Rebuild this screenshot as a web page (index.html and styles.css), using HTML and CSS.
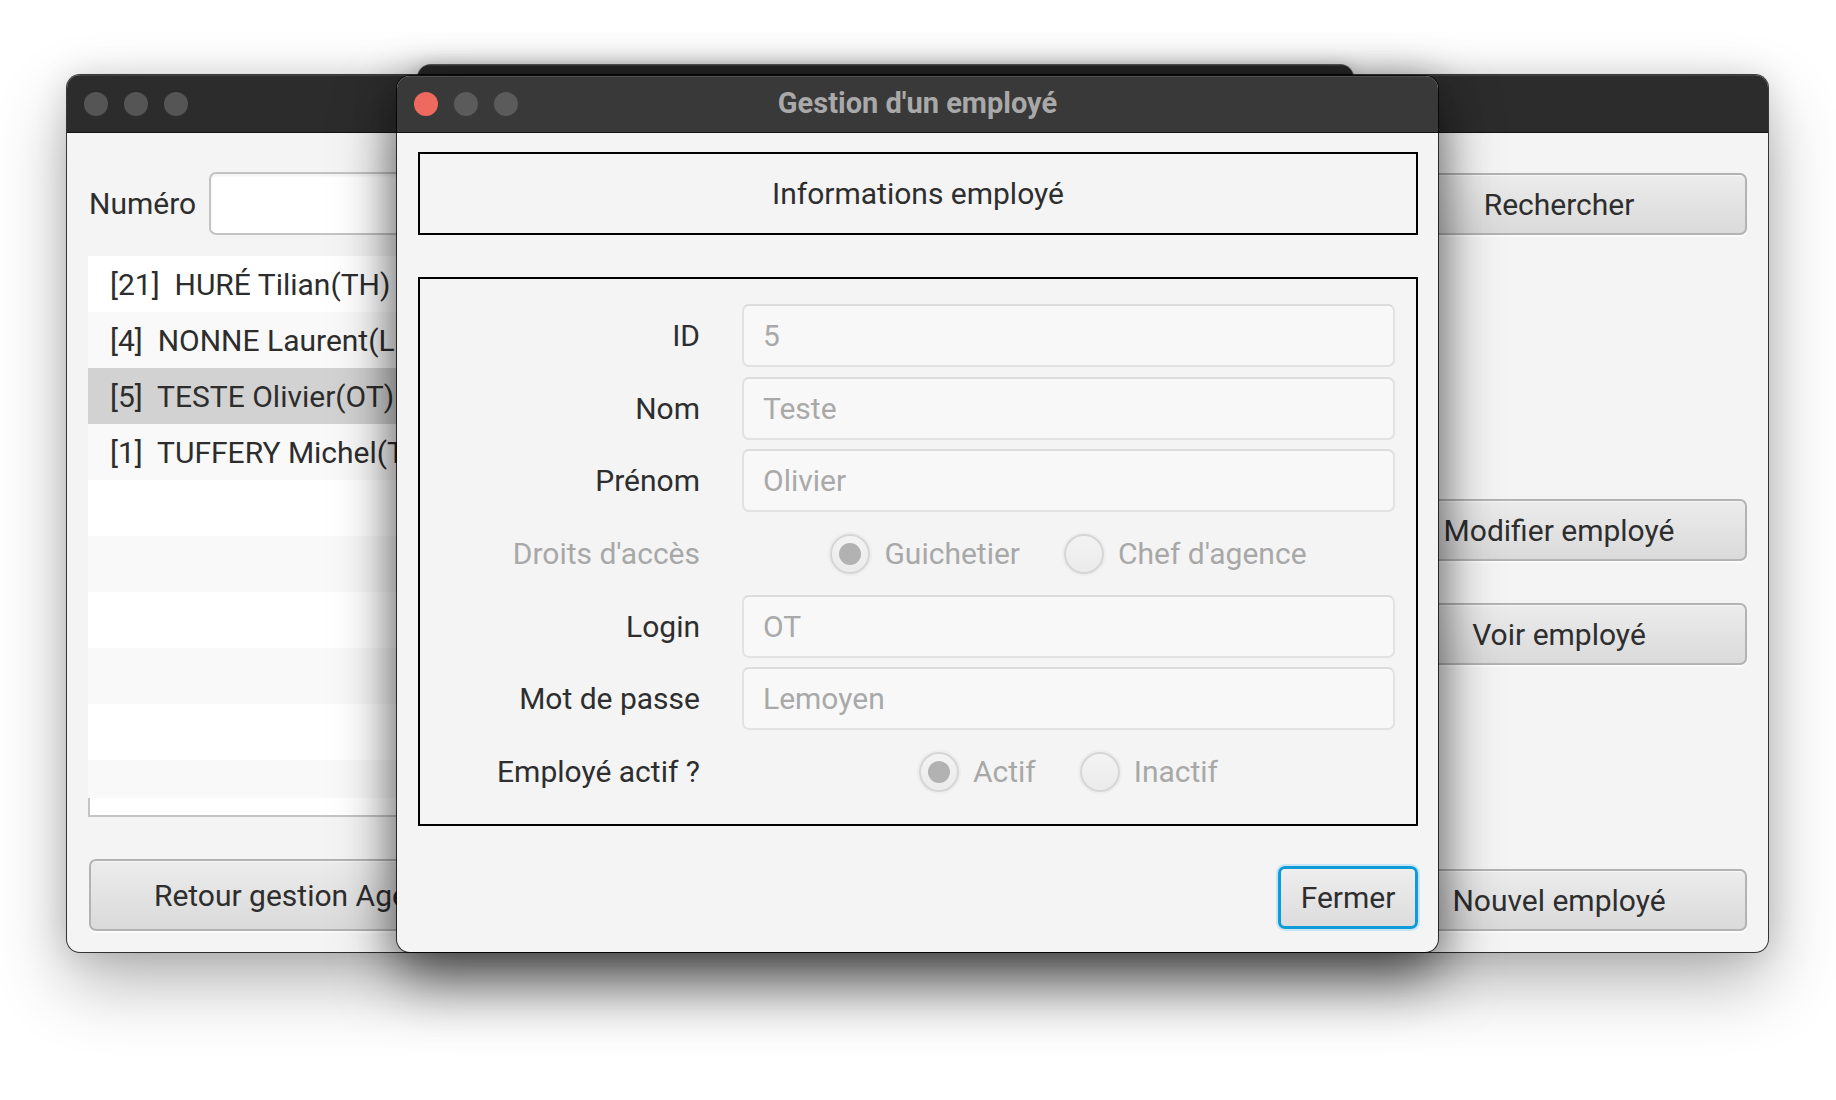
FILE: index.html
```html
<!DOCTYPE html>
<html lang="fr">
<head>
<meta charset="utf-8">
<title>Gestion d'un employé</title>
<link rel="stylesheet" href="styles.css">
</head>
<body>
<div class="desk">

  <div class="win win-ghost">
    <div class="titlebar"></div>
  </div>

  <div class="win win-main">
    <div class="titlebar">
      <div class="dots"><span class="dot"></span><span class="dot"></span><span class="dot"></span></div>
    </div>
    <div class="main-body">
      <div class="left-col">
        <div class="search-row">
          <span class="lbl">Numéro</span>
          <div class="field"></div>
        </div>
        <div class="list">
          <div class="rows">
            <div class="row">[21]  HURÉ Tilian(TH)</div>
            <div class="row">[4]  NONNE Laurent(LN)</div>
            <div class="row selected">[5]  TESTE Olivier(OT)</div>
            <div class="row">[1]  TUFFERY Michel(TM)</div>
            <div class="row"></div>
            <div class="row"></div>
            <div class="row"></div>
            <div class="row"></div>
            <div class="row"></div>
            <div class="row"></div>
          </div>
        </div>
        <button class="btn btn-tall btn-retour">Retour gestion Agence</button>
      </div>
      <div class="right-col">
        <button class="btn btn-search">Rechercher</button>
        <button class="btn btn-modif">Modifier employé</button>
        <button class="btn btn-voir">Voir employé</button>
        <button class="btn btn-new">Nouvel employé</button>
      </div>
    </div>
  </div>

  <div class="win win-dialog">
    <div class="titlebar">
      <div class="dots"><span class="dot red"></span><span class="dot"></span><span class="dot"></span></div>
      <div class="title">Gestion d'un employé</div>
    </div>
    <div class="dlg-body">
      <div class="box box-head">Informations employé</div>
      <div class="box form">
        <span class="flabel">ID</span>
        <div class="input">5</div>

        <span class="flabel">Nom</span>
        <div class="input">Teste</div>

        <span class="flabel">Prénom</span>
        <div class="input">Olivier</div>

        <span class="flabel muted">Droits d'accès</span>
        <div class="radios">
          <div class="opt"><span class="radio on"></span><span>Guichetier</span></div>
          <div class="opt"><span class="radio"></span><span>Chef d'agence</span></div>
        </div>

        <span class="flabel">Login</span>
        <div class="input">OT</div>

        <span class="flabel">Mot de passe</span>
        <div class="input">Lemoyen</div>

        <span class="flabel">Employé actif ?</span>
        <div class="radios">
          <div class="opt"><span class="radio on"></span><span>Actif</span></div>
          <div class="opt"><span class="radio"></span><span>Inactif</span></div>
        </div>
      </div>
      <div class="dlg-foot">
        <button class="btn btn-fermer">Fermer</button>
      </div>
    </div>
  </div>

</div>
</body>
</html>
```

FILE: styles.css
```css
* { box-sizing: border-box; }

html, body {
  margin: 0;
  padding: 0;
  background: #ffffff;
}

body {
  font-family: Roboto, "Liberation Sans", sans-serif;
  font-size: 30px;
  color: #2e2e2e;
}

.desk {
  position: relative;
  width: 1836px;
  height: 1100px;
  overflow: hidden;
  background: #ffffff;
}

/* ---------- windows ---------- */
.win {
  position: absolute;
  border-radius: 13px;
  overflow: hidden;
  background: #f4f4f4;
  display: flex;
  flex-direction: column;
}

.titlebar {
  flex: none;
  position: relative;
  display: flex;
  align-items: center;
  border-bottom: 1px solid #141414;
  box-shadow: inset 0 1px 0 rgba(255,255,255,0.10);
}

.dots {
  display: flex;
  gap: 16px;
  padding-left: 17px;
}

.dot {
  width: 24px;
  height: 24px;
  border-radius: 50%;
  background: #575757;
}

.dot.red { background: #ee6a5e; }

.win-ghost {
  left: 418px;
  top: 65px;
  width: 935px;
  height: 300px;
  background: #2a2a2a;
  box-shadow: 0 0 0 1px rgba(0,0,0,0.6), 0 0 18px rgba(0,0,0,0.18);
}
.win-ghost .titlebar { height: 58px; background: #2a2a2a; }

.win-main {
  left: 67px;
  top: 75px;
  width: 1701px;
  height: 877px;
  box-shadow: 0 0 0 1px rgba(0,0,0,0.75), 0 30px 70px rgba(0,0,0,0.30), 0 0 32px rgba(0,0,0,0.13);
}
.win-main .titlebar {
  height: 58px;
  background: #2c2c2c;
}
.win-main .dot { background: #555555; }
.win-main .dots { padding-left: 17px; }

.main-body {
  flex: 1;
  display: flex;
  gap: 21px;
  padding: 0 21px 21px 22px;
}

.left-col {
  flex: 1;
  display: flex;
  flex-direction: column;
}

.search-row {
  margin-top: 39px;
  height: 63px;
  display: flex;
  align-items: center;
  gap: 13px;
}

.lbl { color: #2e2e2e; }

.field {
  flex: 1;
  height: 63px;
  background: #ffffff;
  border: 2px solid #c3c3c3;
  border-radius: 7px;
  box-shadow: inset 0 2px 3px rgba(0,0,0,0.06);
}

.list {
  margin-top: 21px;
  margin-left: -1px;
  height: 561px;
  background: #ffffff;
  border: 2px solid #c4c4c4;
  border-top: none;
}

.rows {
  height: 542px;
  overflow: hidden;
  margin: 0 -2px;
}

.row {
  height: 56px;
  display: flex;
  align-items: center;
  padding-left: 22px;
  white-space: pre;
  color: #2d2d2d;
  background: #ffffff;
}
.row:nth-child(even) { background: #f9f9f9; }
.row.selected { background: #d2d2d2; }

/* ---------- buttons ---------- */
.btn {
  font-family: Roboto, "Liberation Sans", sans-serif;
  font-size: 30px;
  color: #2e2e2e;
  height: 62px;
  padding: 0;
  border: 2px solid #b3b3b3;
  border-radius: 7px;
  background: linear-gradient(#ececec, #dadada);
  box-shadow: 0 2px 0 #fbfbfb, inset 0 1px 0 rgba(255,255,255,0.5);
  display: flex;
  align-items: center;
  justify-content: center;
}

.btn-tall { height: 72px; }

.btn-retour {
  margin-top: 42px;
  width: 432px;
}

.right-col {
  width: 376px;
  display: flex;
  flex-direction: column;
}

.btn-search { margin-top: 40px; }
.btn-modif { margin-top: 264px; }
.btn-voir { margin-top: 42px; }
.btn-new { margin-top: auto; }

/* ---------- dialog ---------- */
.win-dialog {
  left: 397px;
  top: 76px;
  width: 1041px;
  height: 876px;
  box-shadow: 0 0 0 1px rgba(0,0,0,0.75), 0 28px 60px rgba(0,0,0,0.55), 0 0 40px rgba(0,0,0,0.25);
}

.win-dialog .titlebar {
  height: 57px;
  background: #3a3939;
}

.win-dialog .dot { background: #5b5b5b; }
.win-dialog .dot.red { background: #ee6a5e; }

.title {
  position: absolute;
  left: 0;
  right: 0;
  top: 0;
  bottom: 0;
  display: flex;
  align-items: center;
  justify-content: center;
  font-weight: 700;
  font-size: 29px;
  color: #a9a9a9;
  padding-bottom: 2px;
  pointer-events: none;
}

.dlg-body {
  flex: 1;
  display: flex;
  flex-direction: column;
  padding: 19px 20px 21px 21px;
}

.box {
  border: 2px solid #000000;
}

.box-head {
  height: 83px;
  display: flex;
  align-items: center;
  justify-content: center;
  color: #2e2e2e;
  padding-bottom: 0;
}

.form {
  margin-top: 42px;
  height: 549px;
  display: grid;
  grid-template-columns: 280px 1fr;
  grid-auto-rows: 63px;
  column-gap: 42px;
  row-gap: 9.7px;
  padding: 25px 21px 21px 0;
}

.flabel {
  align-self: center;
  justify-self: end;
  color: #2e2e2e;
  white-space: nowrap;
}
.flabel.muted { color: #a8a8a8; }

.input {
  display: flex;
  align-items: center;
  padding-left: 19px;
  background: #f8f8f8;
  border: 2px solid #e2e2e2;
  border-top-color: #dcdcdc;
  border-radius: 7px;
  color: #a9a9a9;
}

.radios {
  display: flex;
  align-items: center;
  justify-content: center;
  gap: 44px;
  color: #a8a8a8;
}

.opt {
  display: flex;
  align-items: center;
  gap: 14px;
}

.radio {
  width: 40px;
  height: 40px;
  border-radius: 50%;
  border: 2px solid #d6d6d6;
  background: linear-gradient(#f3f3f3, #ebebeb);
  box-shadow: 0 0 0 2px #ededed;
  display: flex;
  align-items: center;
  justify-content: center;
}
.radio.on::after {
  content: "";
  width: 22px;
  height: 22px;
  border-radius: 50%;
  background: #b2b2b2;
}

.dlg-foot {
  margin-top: 40px;
  display: flex;
  justify-content: flex-end;
}

.btn-fermer {
  width: 140px;
  height: 63px;
  border: 3px solid #0f9bd7;
  box-shadow: 0 0 0 2px #c6e6f5;
  background: linear-gradient(#eeeeee, #dcdcdc);
}
```
